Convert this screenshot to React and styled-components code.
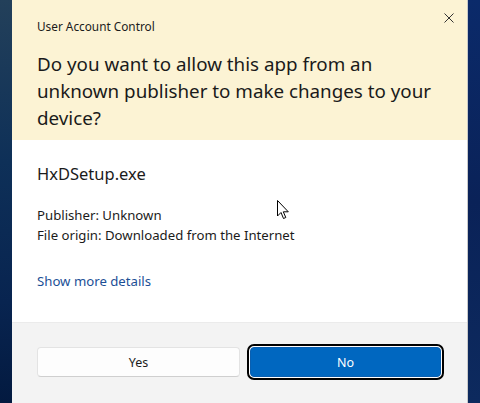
import React from 'react'
import styled, { createGlobalStyle } from 'styled-components'

const Global = createGlobalStyle`
html, body {
  margin: 0;
  padding: 0;
  width: 480px;
  height: 403px;
  overflow: hidden;
  background: #0a2147;
}
body {
  font-family: "Noto Sans", "Open Sans", sans-serif;
  color: #1b1b1b;
}
`

const Screen = styled.div`
display: flex;
width: 480px;
height: 403px;
`

const Backdrop = styled.div`
width: 12px;
flex-shrink: 0;
background: ${p => p.side === 'left'
    ? 'linear-gradient(180deg, #23405a 0%, #0e3058 40%, #082450 75%, #031a40 100%)'
    : 'linear-gradient(180deg, #0b2a6a 0%, #0a2258 50%, #0d2a5e 100%)'};
`

const Dialog = styled.div`
flex: 1;
display: flex;
flex-direction: column;
position: relative;
border-right: 1px solid #c9c9c9;
`

const Header = styled.div`
height: 140px;
box-sizing: border-box;
background: #fcf3d4;
padding: 18px 25px 0 25px;
position: relative;
`

const Caption = styled.div`
font-size: 11.8px;
line-height: 16px;
`

const Question = styled.h1`
margin: 17px 0 0 0;
font-size: 18.8px;
font-weight: 400;
line-height: 27px;
color: #1a1a1a;
`

const Close = styled.button`
position: absolute;
top: 9px;
right: 9px;
width: 18px;
height: 18px;
padding: 0;
border: none;
background: transparent;
display: flex;
align-items: center;
justify-content: center;
`

const Body = styled.div`
height: 182px;
box-sizing: border-box;
background: #ffffff;
padding: 22px 25px 0 25px;
position: relative;
`

const AppName = styled.div`
font-size: 16.5px;
line-height: 24px;
`

const Details = styled.div`
margin-top: 19px;
font-size: 13.2px;
line-height: 20px;
`

const Link = styled.div`
margin-top: 26px;
font-size: 13.2px;
line-height: 20px;
color: #1c4f96;
`

const Cursor = styled.svg`
position: absolute;
left: 265px;
top: 60px;
`

const Footer = styled.div`
flex: 1;
background: #f3f3f3;
border-top: 1px solid #ebebeb;
display: flex;
align-items: flex-start;
padding: 24px 0 0 25px;
gap: 10px;
`

const Button = styled.button`
height: 30px;
box-sizing: border-box;
width: ${p => p.w}px;
font-family: inherit;
font-size: 12.5px;
border-radius: 4px;
padding: 0;
${p => p.primary ? `
  background: #0067c0;
  color: #ffffff;
  border: 1px solid #0a5fb0;
  outline: 2px solid #000000;
  outline-offset: 1px;
  box-shadow: 0 0 0 1px #ffffff;
` : `
  background: #fdfdfd;
  color: #1b1b1b;
  border: 1px solid #e3e3e3;
  border-bottom-color: #cfcfcf;
`}
`

const App = () => {
    return (
        <Screen>
            <Global />
            <Backdrop side="left" />
            <Dialog>
                <Header>
                    <Caption>User Account Control</Caption>
                    <Question>Do you want to allow this app from an unknown publisher to make changes to your device?</Question>
                    <Close aria-label="Close">
                        <svg width="10" height="10" viewBox="0 0 10 10">
                            <path d="M0.5 0.5 L9.5 9.5 M9.5 0.5 L0.5 9.5" stroke="#333" strokeWidth="1" fill="none" />
                        </svg>
                    </Close>
                </Header>
                <Body>
                    <AppName>HxDSetup.exe</AppName>
                    <Details>
                        Publisher: Unknown<br />
                        File origin: Downloaded from the Internet
                    </Details>
                    <Link>Show more details</Link>
                    <Cursor width="13" height="20" viewBox="0 0 13 20">
                        <path d="M0.5 0.5 L0.5 16 L4 12.5 L6.5 18.5 L8.8 17.5 L6.3 11.8 L11.3 11.8 Z" fill="#ffffff" stroke="#000000" strokeWidth="1" strokeLinejoin="round" />
                    </Cursor>
                </Body>
                <Footer>
                    <Button w={203}>Yes</Button>
                    <Button w={191} primary>No</Button>
                </Footer>
            </Dialog>
            <Backdrop side="right" />
        </Screen>
    )
}

export default App
